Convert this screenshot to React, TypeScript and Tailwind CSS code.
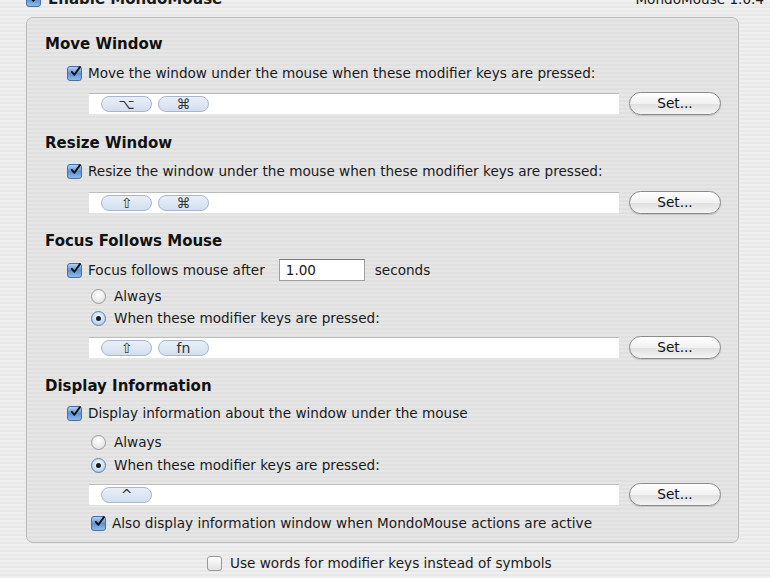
const font = "font-['DejaVu_Sans',sans-serif]";

function CheckBox({ checked = true }: { checked?: boolean }) {
  return (
    <span
      className={
        "inline-flex h-[15px] w-[15px] shrink-0 items-center justify-center rounded-[3px] border " +
        (checked
          ? "border-[#4a6f9c] bg-[linear-gradient(to_bottom,#b4d0f0,#5d93d4_50%,#8fb9ea)]"
          : "border-[#9a9a9a] bg-[linear-gradient(to_bottom,#ffffff,#e2e2e2)]")
      }
    >
      {checked && (
        <svg width="15" height="15" viewBox="0 0 15 15" className="-mt-[3px] ml-[2px]">
          <path d="M2.5 8 L6 12 L13.5 1.5" fill="none" stroke="#111" strokeWidth="2.6" strokeLinecap="round" strokeLinejoin="round" />
        </svg>
      )}
    </span>
  );
}

function Radio({ on = false }: { on?: boolean }) {
  return (
    <span
      className={
        "inline-flex h-[15px] w-[15px] shrink-0 items-center justify-center rounded-full border " +
        (on
          ? "border-[#5b7fae] bg-[radial-gradient(circle_at_50%_40%,#ffffff,#b9d3f0_70%,#7ea6d8)]"
          : "border-[#9c9c9c] bg-[radial-gradient(circle_at_50%_35%,#ffffff,#e6e6e6_70%,#c9c9c9)]")
      }
    >
      {on && <span className="h-[5px] w-[5px] rounded-full bg-[#1a1a1a]" />}
    </span>
  );
}

function Key({ label }: { label: string }) {
  return (
    <span className="flex h-[16px] w-[51px] items-center justify-center rounded-full border border-[#a7b6cc] bg-[linear-gradient(to_bottom,#e9eff8,#d3dfee)] text-[14px] leading-none text-[#333]">
      {label}
    </span>
  );
}

function SetButton() {
  return (
    <button className="flex h-[23px] w-[92px] items-center justify-center rounded-full border border-[#8a8a8a] bg-[linear-gradient(to_bottom,#ffffff,#f1f1f1_50%,#e0e0e0_55%,#f4f4f4)] text-[13.6px] text-[#111] shadow-[0_1px_1px_rgba(0,0,0,0.15)]">
      Set...
    </button>
  );
}

function KeyField({ keys }: { keys: string[] }) {
  return (
    <div className="flex h-[23px] items-center">
      <div className="ml-[88px] flex h-[21px] w-[530px] items-center gap-[6px] border-t border-[#bdbdbd] bg-white pl-[12px]">
        {keys.map((k, i) => (
          <Key key={i} label={k} />
        ))}
      </div>
      <div className="ml-[10px]">
        <SetButton />
      </div>
    </div>
  );
}

function Heading({ children, mt }: { children: string; mt: string }) {
  return (
    <div className={"flex h-[20px] items-center pl-[18px] text-[15px] font-bold text-[#111] " + mt}>
      {children}
    </div>
  );
}

function CheckRow({ children, mt, indent = "pl-[40px]" }: { children: React.ReactNode; mt: string; indent?: string }) {
  return (
    <div className={"flex h-[20px] items-center gap-[6px] " + indent + " " + mt}>
      <CheckBox />
      <span>{children}</span>
    </div>
  );
}

function RadioRow({ children, on, mt }: { children: string; on?: boolean; mt: string }) {
  return (
    <div className={"flex h-[20px] items-center gap-[8px] pl-[64px] " + mt}>
      <Radio on={on} />
      <span>{children}</span>
    </div>
  );
}

export default function App() {
  return (
    <div
      className={
        "h-[578px] w-[770px] overflow-hidden bg-[repeating-linear-gradient(to_bottom,#efefef_0px,#efefef_2px,#e8e8e8_2px,#e8e8e8_4px)] text-[13.6px] text-[#1a1a1a] " +
        font
      }
    >
      <div className="-mt-[12px] flex h-[22px] items-center pl-[26px] pr-[6px]">
        <CheckBox />
        <span className="ml-[7px] text-[15px] font-bold">Enable MondoMouse</span>
        <span className="ml-auto text-[13.6px]">MondoMouse 1.0.4</span>
      </div>

      <div className="ml-[26px] mt-[7px] h-[526px] w-[713px] rounded-[7px] border border-[#bcbcbc] bg-[repeating-linear-gradient(to_bottom,#e6e6e6_0px,#e6e6e6_2px,#e0e0e0_2px,#e0e0e0_4px)] pt-[16px]">
        <Heading mt="">Move Window</Heading>
        <CheckRow mt="mt-[9px]">Move the window under the mouse when these modifier keys are pressed:</CheckRow>
        <div className="mt-[9px] -ml-[26px]">
          <KeyField keys={["⌥", "⌘"]} />
        </div>

        <Heading mt="mt-[18px]">Resize Window</Heading>
        <CheckRow mt="mt-[8px]">Resize the window under the mouse when these modifier keys are pressed:</CheckRow>
        <div className="mt-[10px] -ml-[26px]">
          <KeyField keys={["⇧", "⌘"]} />
        </div>

        <Heading mt="mt-[17px]">Focus Follows Mouse</Heading>
        <div className="mt-[8px] flex h-[22px] items-center gap-[6px] pl-[40px]">
          <CheckBox />
          <span>Focus follows mouse after</span>
          <span className="ml-[8px] flex h-[22px] w-[86px] items-center border border-[#a0a0a0] border-t-[#7a7a7a] bg-white pl-[6px]">
            1.00
          </span>
          <span className="ml-[4px]">seconds</span>
        </div>
        <RadioRow mt="mt-[5px]">Always</RadioRow>
        <RadioRow on mt="mt-[2px]">When these modifier keys are pressed:</RadioRow>
        <div className="mt-[8px] -ml-[26px]">
          <KeyField keys={["⇧", "fn"]} />
        </div>

        <Heading mt="mt-[17px]">Display Information</Heading>
        <CheckRow mt="mt-[7px]">Display information about the window under the mouse</CheckRow>
        <RadioRow mt="mt-[9px]">Always</RadioRow>
        <RadioRow on mt="mt-[3px]">When these modifier keys are pressed:</RadioRow>
        <div className="mt-[8px] -ml-[26px]">
          <KeyField keys={["^"]} />
        </div>
        <CheckRow mt="mt-[7px]" indent="pl-[64px]">
          Also display information window when MondoMouse actions are active
        </CheckRow>
      </div>

      <div className="mt-[10px] flex h-[20px] items-center gap-[8px] pl-[207px]">
        <CheckBox checked={false} />
        <span>Use words for modifier keys instead of symbols</span>
      </div>
    </div>
  );
}
